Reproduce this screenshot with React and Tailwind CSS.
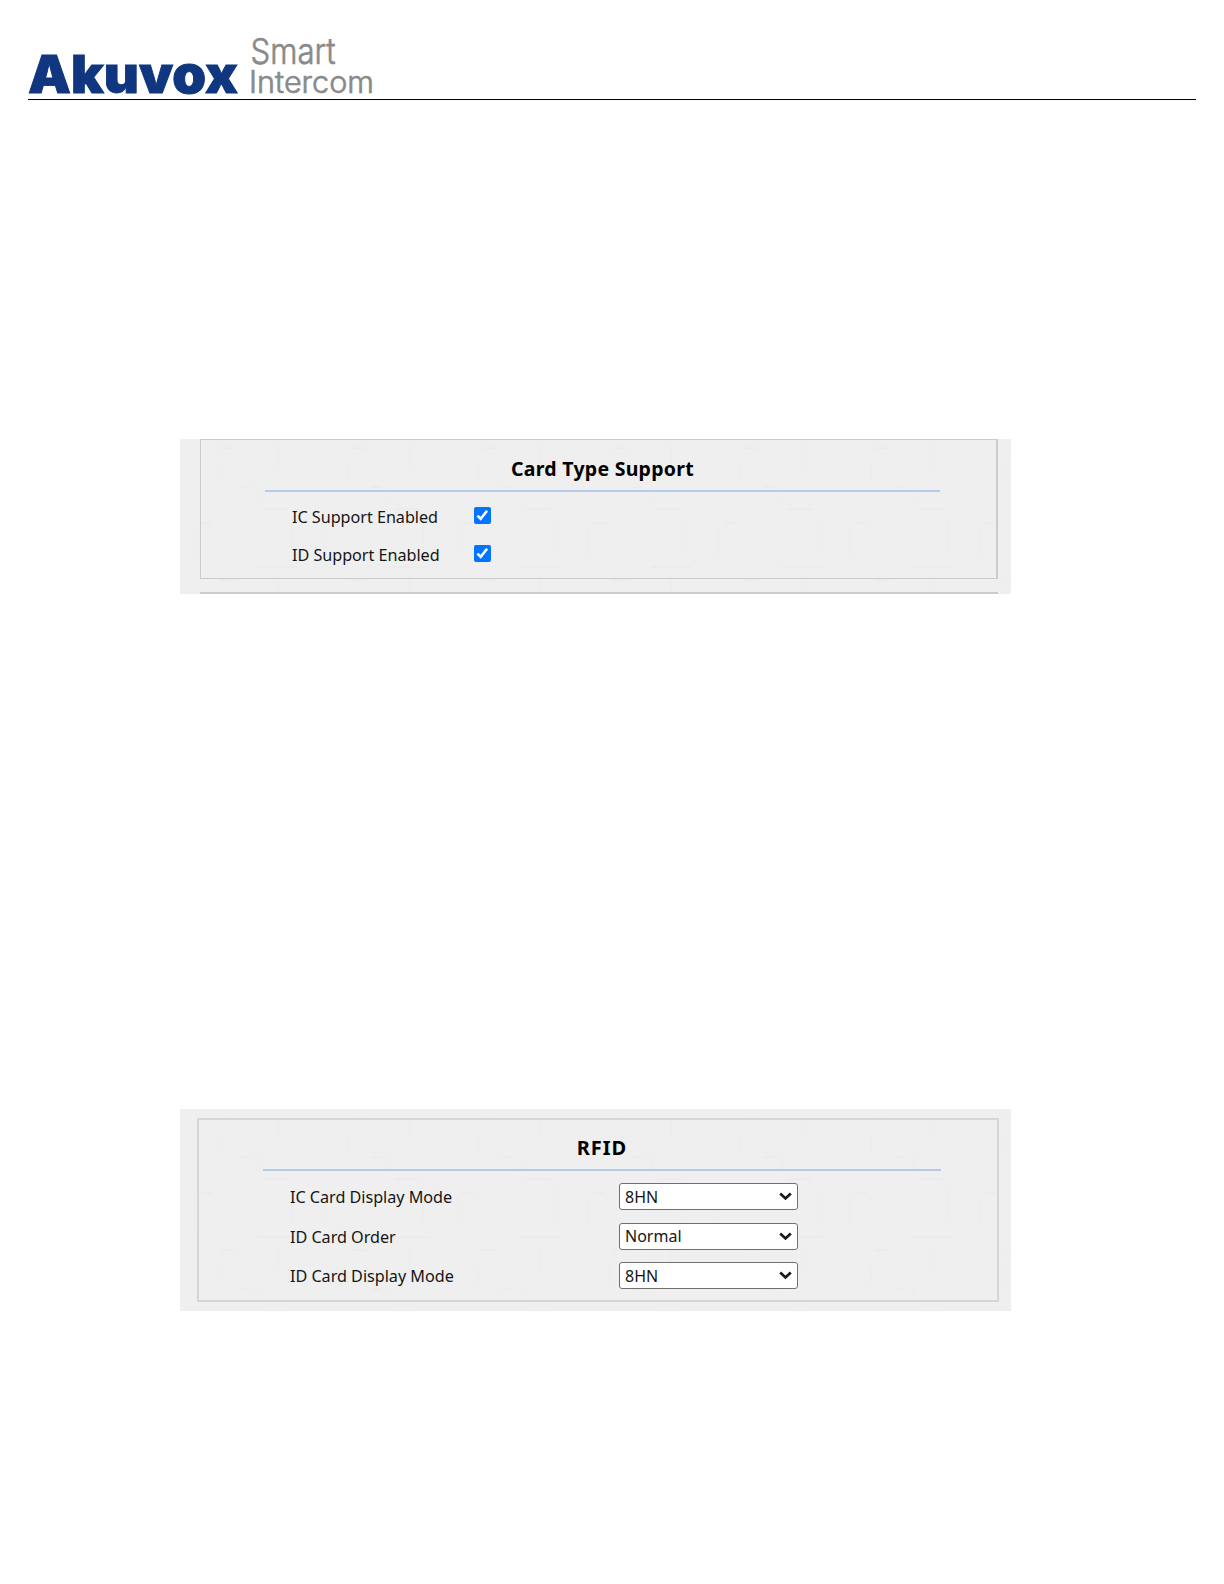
import React, { useState } from "react";

const MODES = ["8HN", "8HR", "10D", "6H3D5D"];
const ORDERS = ["Normal", "Reversed"];

const Logo = () => (
  <svg width="360" height="80" viewBox="0 0 360 80" className="block">
    <text
      x="0"
      y="65.3"
      textLength="210"
      lengthAdjust="spacingAndGlyphs"
      className="fill-[#10367f] stroke-[#10367f] stroke-[0.9] font-[Inter,sans-serif] text-[52px] font-black"
    >
      Akuvox
    </text>
    <text
      x="222.5"
      y="36"
      textLength="85"
      lengthAdjust="spacingAndGlyphs"
      className="fill-[#8a8a8a] stroke-[#8a8a8a] stroke-[0.7] font-[Inter,sans-serif] text-[36px] font-light"
    >
      Smart
    </text>
    <text
      x="221"
      y="65.3"
      textLength="125"
      lengthAdjust="spacingAndGlyphs"
      className="fill-[#8a8a8a] stroke-[#8a8a8a] stroke-[0.7] font-[Inter,sans-serif] text-[31px] font-light"
    >
      Intercom
    </text>
  </svg>
);

// Faint woven texture behind the form sections
const Texture = ({ id }) => (
  <svg className="absolute inset-0 h-full w-full" aria-hidden="true">
    <defs>
      <pattern id={id} width="131" height="132" patternUnits="userSpaceOnUse">
        <path
          d="M60 48h10M84 70h24M78 128h40M20 84h12M40 9h14"
          stroke="#e8e8e8"
        />
        <path
          d="M36 24v20M78 46v16M112 78v36M14 88v30M98 4v26"
          stroke="#ececec"
        />
      </pattern>
    </defs>
    <rect width="100%" height="100%" fill={`url(#${id})`} />
  </svg>
);

const CheckRow = ({ label, checked, onChange }) => (
  <label className="flex h-[38px] items-center">
    <span className="w-[182px] pt-0.5 text-[16.2px] leading-6 tracking-[-0.03px] whitespace-nowrap">
      {label}
    </span>
    <input
      type="checkbox"
      checked={checked}
      onChange={onChange}
      className="peer sr-only"
    />
    <span className="mb-px flex h-[17px] w-[17px] items-center justify-center rounded-[2px] bg-[#0075ff]">
      {checked && (
        <svg width="17" height="17" viewBox="0 0 17 17" fill="none">
          <path d="M3.4 8.6l3.3 3.2 6.4-8" stroke="#fff" strokeWidth="2.6" />
        </svg>
      )}
    </span>
  </label>
);

const SelectRow = ({ label, value, options, onChange }) => (
  <label className="flex h-[39.5px] items-center">
    <span className="w-[329px] pt-[0.5px] text-[16.2px] leading-6 tracking-[-0.03px] whitespace-nowrap">
      {label}
    </span>
    <span className="relative h-[27px] w-[179px]">
      <select
        value={value}
        onChange={onChange}
        className="h-full w-full appearance-none rounded-[3px] border border-[#707070] bg-white pl-[5px] text-[16px] leading-6"
      >
        {options.map((option) => (
          <option key={option}>{option}</option>
        ))}
      </select>
      <svg
        className="pointer-events-none absolute top-[9px] right-[6px]"
        width="13"
        height="9"
        viewBox="0 0 13 9"
        fill="none"
      >
        <path d="M1.2 1.5l5.3 5 5.3-5" stroke="#1a1a1a" strokeWidth="2.7" />
      </svg>
    </span>
  </label>
);

const App = () => {
  const [icEnabled, setIcEnabled] = useState(true);
  const [idEnabled, setIdEnabled] = useState(true);
  const [icMode, setIcMode] = useState("8HN");
  const [idOrder, setIdOrder] = useState("Normal");
  const [idMode, setIdMode] = useState("8HN");

  return (
    <div className="h-[1584px] w-[1224px] overflow-hidden bg-white font-['Noto_Sans',sans-serif] text-[#151515]">
      <header className="mx-7 h-[100px] border-b border-black pt-7">
        <Logo />
      </header>

      <section className="relative mt-[339px] ml-[180px] h-[155px] w-[831px] bg-[#efefef]">
        <Texture id="weave-cards" />
        <div className="relative mr-[13px] ml-5 h-[140px] border border-r-2 border-[#cbcbcb]">
          <div className="mr-[56px] ml-16 h-[52px] border-b-2 border-[#b4cbec] pt-[14px] text-center">
            <h2 className="text-[19.5px] leading-[30px] font-bold tracking-[0.27px] text-black">
              Card Type Support
            </h2>
          </div>
          <div className="ml-[91px] pt-[5px]">
            <CheckRow
              label="IC Support Enabled"
              checked={icEnabled}
              onChange={(e) => setIcEnabled(e.target.checked)}
            />
            <CheckRow
              label="ID Support Enabled"
              checked={idEnabled}
              onChange={(e) => setIdEnabled(e.target.checked)}
            />
          </div>
        </div>
        <div className="relative mt-[13px] mr-[13px] ml-5 h-0.5 bg-[#cccccc]" />
      </section>

      <section className="relative mt-[515px] ml-[180px] h-[202px] w-[831px] bg-[#efefef] pt-[9px]">
        <Texture id="weave-rfid" />
        <div className="relative mr-3 ml-[17px] h-[184px] border-2 border-[#d6d6d6]">
          <div className="mr-[56px] ml-16 h-[51px] border-b-2 border-[#b4c9e5] pt-[14px] text-center">
            <h2 className="text-[20px] leading-[28px] font-bold tracking-[1px] text-black">
              RFID
            </h2>
          </div>
          <div className="ml-[91px] pt-1.5">
            <SelectRow
              label="IC Card Display Mode"
              value={icMode}
              options={MODES}
              onChange={(e) => setIcMode(e.target.value)}
            />
            <SelectRow
              label="ID Card Order"
              value={idOrder}
              options={ORDERS}
              onChange={(e) => setIdOrder(e.target.value)}
            />
            <SelectRow
              label="ID Card Display Mode"
              value={idMode}
              options={MODES}
              onChange={(e) => setIdMode(e.target.value)}
            />
          </div>
        </div>
      </section>
    </div>
  );
};

export default App;
